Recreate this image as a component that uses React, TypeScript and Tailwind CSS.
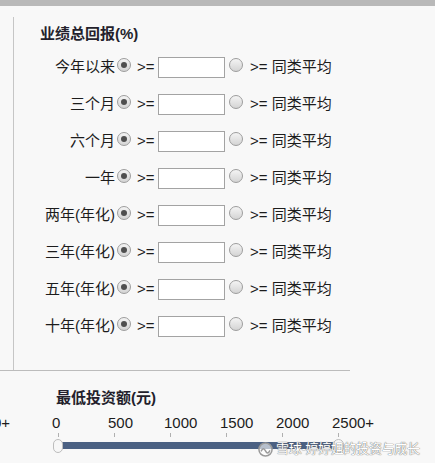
import React from "react";

const rows = ["今年以来", "三个月", "六个月", "一年", "两年(年化)", "三年(年化)", "五年(年化)", "十年(年化)"];
const ticks = ["0", "500", "1000", "1500", "2000", "2500+"];

function Radio({ checked, className = "" }: { checked?: boolean; className?: string }) {
  return (
    <span
      className={`mt-[1px] flex h-[14px] w-[14px] shrink-0 items-center justify-center self-start rounded-full border border-[#9d9d9d] bg-gradient-to-b from-[#f4f4f4] to-[#d4d4d4] ${className}`}
    >
      {checked && <span className="h-[6px] w-[6px] rounded-full bg-[#4f4f4f]" />}
    </span>
  );
}

function ReturnRow({ label }: { label: string }) {
  return (
    <div className="flex h-[21px] items-center">
      <span className="w-[101px] shrink-0 whitespace-nowrap text-right">{label}</span>
      <Radio checked className="ml-[2px]" />
      <span className="ml-[6px] w-[21px] shrink-0">&gt;=</span>
      <input className="h-[21px] w-[67px] shrink-0 border border-[#a3a3a3] bg-white outline-none" />
      <Radio className="ml-[4px]" />
      <span className="ml-[7px] whitespace-nowrap">&gt;= 同类平均</span>
    </div>
  );
}

export default function App() {
  return (
    <div
      className="relative h-[463px] w-[435px] overflow-hidden bg-[#f8f8f8] text-[15px] text-[#1c1c1c]"
      style={{ fontFamily: "'Liberation Sans', 'Noto Sans CJK SC', sans-serif" }}
    >
      <div className="h-[6px] bg-[#b9b9b9]" />

      {/* returns filter */}
      <div className="mt-[11px] w-[350px] border-b border-[#bcbcbc]">
        <div className="ml-[13px] h-[353px] border-l border-[#c6c6c6] pt-[8px]">
          <div className="h-[18px] pl-[26px] font-bold leading-[18px] text-[#241f2c]">业绩总回报(%)</div>
          <div className="mt-[14px] flex flex-col gap-[16px]">
            {rows.map((r) => (
              <ReturnRow key={r} label={r} />
            ))}
          </div>
        </div>
      </div>

      {/* min investment */}
      <div className="mt-[18px] h-[18px] pl-[56px] font-bold leading-[18px] text-[#241f2c]">最低投资额(元)</div>
      <div className="mt-[8px] flex h-[16px] text-[15px] leading-[16px]">
        <div className="flex w-[10px] shrink-0 justify-end overflow-hidden">
          <span className="shrink-0 whitespace-nowrap">2500+</span>
        </div>
        <div className="ml-[42px] flex">
          {ticks.map((t) => (
            <span key={t} className="w-[56px] shrink-0 whitespace-nowrap">{t}</span>
          ))}
        </div>
      </div>
      <div className="ml-[58px] mt-[2px] flex h-[4px]">
        {ticks.map((t) => (
          <span key={t} className="w-[56px] shrink-0">
            <span className="block h-[4px] w-[1px] bg-[#b0b0b0]" />
          </span>
        ))}
      </div>
      <div className="relative ml-[58px] mt-[5px] h-[7px] w-[280px] bg-[#4b6183]">
        <span className="absolute -left-[5px] -top-[3px] h-[14px] w-[10px] rounded-[5px] border border-[#bdbdbd] bg-[#f7f7f7]" />
        <span className="absolute -right-[6px] -top-[3px] h-[14px] w-[11px] rounded-full border border-[#bdbdbd] bg-[#f7f7f7]" />
      </div>

      {/* watermark */}
      <div className="absolute left-[258px] top-[441px] flex items-center gap-[3px] whitespace-nowrap text-[13px] leading-[16px] tracking-[-0.3px] text-white [text-shadow:0_0_1px_#6d6d6d,0_0_1px_#6d6d6d]">
        <svg width="15" height="15" viewBox="0 0 16 16" fill="none">
          <circle cx="8" cy="8" r="7" stroke="#9a9a9a" strokeWidth="1.6" fill="#ffffff" fillOpacity="0.6" />
          <path d="M3.5 9.5c1.5-3 3-3 4.5 0s3 3 4.5 0" stroke="#9a9a9a" strokeWidth="1.6" strokeLinecap="round" />
        </svg>
        <span>雪球-婷婷姐的投资与成长</span>
      </div>
    </div>
  );
}
